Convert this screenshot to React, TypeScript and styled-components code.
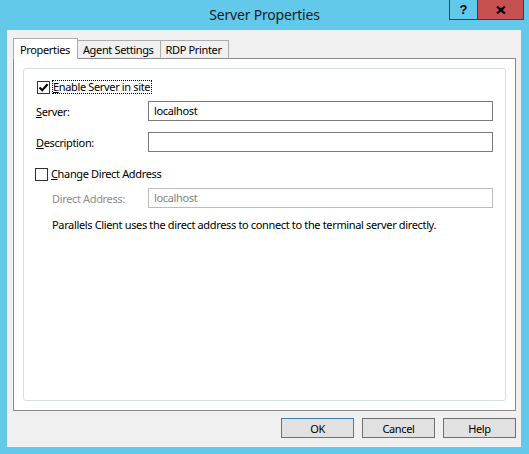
import styled, { createGlobalStyle } from 'styled-components';

const GlobalStyle = createGlobalStyle`
  html, body {
    margin: 0;
    padding: 0;
    background: #63c9ea;
  }
  body {
    font-family: 'Noto Sans', 'Open Sans', sans-serif;
    font-size: 11px;
    letter-spacing: -0.35px;
    color: #000;
  }
`;

const CheckIcon = () => (
  <svg width="11" height="11" viewBox="0 0 11 11">
    <path d="M1.5 5.5 L4.3 8.3 L9.6 2.2" fill="none" stroke="#000" strokeWidth="2.1" />
  </svg>
);

const CloseIcon = () => (
  <svg width="10" height="8" viewBox="0 0 10 8">
    <path d="M1 0.5 L9 7.5 M9 0.5 L1 7.5" stroke="#000" strokeWidth="2.2" />
  </svg>
);

const Checkbox = ({ checked, focused, offset, label, accessKey }: {
  checked?: boolean;
  focused?: boolean;
  offset: number;
  label: string;
  accessKey: string;
}) => (
  <CheckRow $offset={offset}>
    <Box>{checked && <CheckIcon />}</Box>
    <CheckLabel $focused={focused}>
      <u>{accessKey}</u>
      {label.slice(accessKey.length)}
    </CheckLabel>
  </CheckRow>
);

const App = () => {
  return (
    <Window>
      <GlobalStyle />
      <TitleBar>
        <span />
        <Title>Server Properties</Title>
        <CaptionButtons>
          <HelpCaption>?</HelpCaption>
          <CloseCaption>
            <CloseIcon />
          </CloseCaption>
        </CaptionButtons>
      </TitleBar>
      <Client>
        <TabStrip>
          <Tab $active>Properties</Tab>
          <Tab>Agent Settings</Tab>
          <Tab>RDP Printer</Tab>
        </TabStrip>
        <TabPanel>
          <Group>
            <Checkbox checked focused offset={1} accessKey="E" label="Enable Server in site" />
            <FieldRow $top={7}>
              <FieldLabel $width={112}>
                <u>S</u>erver:
              </FieldLabel>
              <TextBox>localhost</TextBox>
            </FieldRow>
            <FieldRow $top={11}>
              <FieldLabel $width={112}>
                <u>D</u>escription:
              </FieldLabel>
              <TextBox />
            </FieldRow>
            <Spacer $h={15} />
            <Checkbox offset={-1} accessKey="C" label="Change Direct Address" />
            <FieldRow $top={7} $indent={16}>
              <FieldLabel $width={96} $disabled>
                Direct Address:
              </FieldLabel>
              <TextBox $disabled>localhost</TextBox>
            </FieldRow>
            <Note>
              Parallels Client uses the direct address to connect to the terminal server directly.
            </Note>
          </Group>
        </TabPanel>
        <ButtonBar>
          <PushButton $default>OK</PushButton>
          <PushButton>Cancel</PushButton>
          <PushButton>Help</PushButton>
        </ButtonBar>
      </Client>
    </Window>
  );
};

const Window = styled.div`
  width: 529px;
  height: 454px;
  display: flex;
  flex-direction: column;
  background: #63c9ea;
  overflow: hidden;
`;

const TitleBar = styled.div`
  height: 30px;
  flex: none;
  display: grid;
  grid-template-columns: 1fr auto 1fr;
`;

const Title = styled.div`
  font-size: 14px;
  letter-spacing: -0.2px;
  line-height: 30px;
  color: #1b1b1b;
`;

const CaptionButtons = styled.div`
  justify-self: end;
  align-self: start;
  display: flex;
  margin-right: 5px;
`;

const CaptionButton = styled.div`
  height: 20px;
  display: flex;
  align-items: center;
  justify-content: center;
  border: 1px solid #3b3b3b;
  border-top: none;
  box-sizing: border-box;
`;

const HelpCaption = styled(CaptionButton)`
  width: 28px;
  border-right: none;
  background: #63c9ea;
  font-family: 'Liberation Sans', Arial, sans-serif;
  font-weight: bold;
  font-size: 13px;
  letter-spacing: 0;
`;

const CloseCaption = styled(CaptionButton)`
  width: 47px;
  background: #c75050;
`;

const Client = styled.div`
  flex: 1;
  margin: 0 8px 7px 7px;
  background: #f0f0f0;
  padding: 8px 5px 0 6px;
  display: flex;
  flex-direction: column;
`;

const TabStrip = styled.div`
  display: flex;
  align-items: flex-end;
  height: 20px;
  position: relative;
  z-index: 1;
`;

const Tab = styled.div<{ $active?: boolean }>`
  box-sizing: border-box;
  height: ${(p) => (p.$active ? '21px' : '18px')};
  margin-bottom: ${(p) => (p.$active ? '-1px' : '0')};
  margin-left: ${(p) => (p.$active ? '0' : '-1px')};
  padding: ${(p) => (p.$active ? '1px 7px 0 6px' : '0 6px 0 5px')};
  border: 1px solid #acacac;
  border-bottom: ${(p) => (p.$active ? 'none' : '1px solid transparent')};
  background: ${(p) => (p.$active ? '#fff' : '#f0f0f0')};
  display: flex;
  align-items: center;
  white-space: nowrap;
  &:first-child {
    margin-left: 0;
    z-index: 1;
  }
`;

const TabPanel = styled.div`
  height: 353px;
  box-sizing: border-box;
  border: 1px solid #8b8b8b;
  background: #fff;
  padding: 9px;
  display: flex;
`;

const Group = styled.div`
  flex: 1;
  border: 1px solid #d5dfe5;
  border-radius: 3px;
  padding: 11px 12px 0 12px;
  display: flex;
  flex-direction: column;
`;

const CheckRow = styled.div<{ $offset: number }>`
  height: 14px;
  display: flex;
  align-items: center;
  margin-left: ${(p) => p.$offset}px;
`;

const Box = styled.div`
  width: 13px;
  height: 13px;
  box-sizing: border-box;
  border: 1px solid #333;
  background: #fff;
  display: flex;
  align-items: center;
  justify-content: center;
  margin-right: 2px;
`;

const CheckLabel = styled.span<{ $focused?: boolean }>`
  line-height: 12px;
  padding: 0 1px 0 0;
  border: 1px dotted ${(p) => (p.$focused ? '#000' : 'transparent')};
`;

const FieldRow = styled.div<{ $top: number; $indent?: number }>`
  display: flex;
  align-items: center;
  margin-top: ${(p) => p.$top}px;
  padding-left: ${(p) => p.$indent ?? 0}px;
`;

const FieldLabel = styled.div<{ $width: number; $disabled?: boolean }>`
  width: ${(p) => p.$width}px;
  flex: none;
  color: ${(p) => (p.$disabled ? '#8d8d8d' : '#000')};
`;

const TextBox = styled.div<{ $disabled?: boolean }>`
  flex: 1;
  height: 20px;
  box-sizing: border-box;
  border: 1px solid ${(p) => (p.$disabled ? '#bcbcbc' : '#7a7a7a')};
  background: #fff;
  padding: 0 5px;
  line-height: 18px;
  color: ${(p) => (p.$disabled ? '#838383' : '#000')};
`;

const Spacer = styled.div<{ $h: number }>`
  height: ${(p) => p.$h}px;
  flex: none;
`;

const Note = styled.div`
  margin-top: 9px;
  padding-left: 16px;
  line-height: 16px;
`;

const ButtonBar = styled.div`
  display: flex;
  justify-content: flex-end;
  gap: 8px;
  padding-top: 7px;
`;

const PushButton = styled.div<{ $default?: boolean }>`
  width: 73px;
  height: 20px;
  box-sizing: border-box;
  border: 1px solid ${(p) => (p.$default ? '#3c7fb1' : '#707070')};
  background: #e1e1e1;
  display: flex;
  align-items: center;
  justify-content: center;
`;

export default App;
